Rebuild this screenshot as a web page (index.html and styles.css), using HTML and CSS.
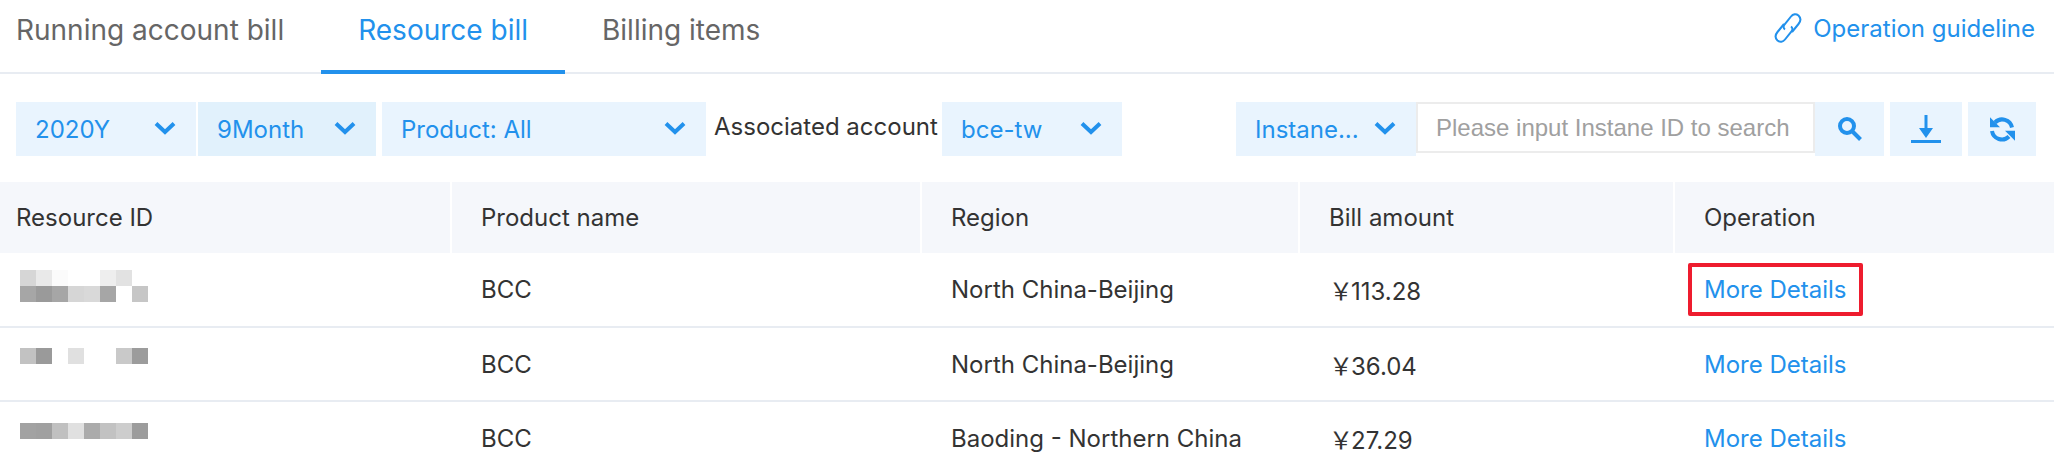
FILE: index.html
```html
<!DOCTYPE html>
<html lang="en">
<head>
    <meta charset="UTF-8">
    <meta name="viewport" content="width=device-width, initial-scale=1.0">
    <title>Resource bill</title>
    <link rel="stylesheet" href="styles.css">
</head>
<body>
    <svg class="defs" width="0" height="0">
        <symbol id="chevron" viewBox="0 0 22 14">
            <path d="M2 2.500 L11 11 L20 2.500" fill="none" stroke="currentColor" stroke-width="4"/>
        </symbol>
    </svg>

    <nav class="tabs">
        <a class="tab">Running account bill</a>
        <a class="tab active">Resource bill</a>
        <a class="tab">Billing items</a>
        <a class="guide">
            <svg class="guide-icon" viewBox="0 0 28 30" fill="none" stroke="currentColor" stroke-width="2">
                <path d="M10 11 L3.500 19 C1 22 1 25 3.500 27.500 C6 29.500 9 29 11 26.500 L17.500 18.500 C19 16.500 18.500 14.500 17 13.500"/>
                <path d="M18 19 L24.500 11 C27 8 27 5 24.500 2.500 C22 0.500 19 1 17 3.500 L10.500 11.500 C9 13.500 9.500 15.500 11 16.500"/>
            </svg>
            Operation guideline
        </a>
    </nav>

    <div class="toolbar">
        <div class="select w-year">2020Y <svg class="chevron"><use href="#chevron"/></svg></div>
        <div class="select w-month hover">9Month <svg class="chevron"><use href="#chevron"/></svg></div>
        <div class="select w-product">Product: All <svg class="chevron"><use href="#chevron"/></svg></div>
        <span class="label">Associated account</span>
        <div class="select w-account">bce-tw <svg class="chevron"><use href="#chevron"/></svg></div>

        <div class="search">
            <div class="select w-type">Instane... <svg class="chevron"><use href="#chevron"/></svg></div>
            <input class="search-input" type="text" placeholder="Please input Instane ID to search">
            <button class="icon-btn w-search">
                <svg width="24" height="24" viewBox="0 0 24 24" fill="none" stroke="currentColor" stroke-width="4">
                    <circle cx="9" cy="9" r="7"/>
                    <path d="M14 14 L22.500 22.500"/>
                </svg>
            </button>
        </div>
        <button class="icon-btn w-download">
            <svg width="30" height="28" viewBox="0 0 30 28" fill="currentColor">
                <path d="M13.500 0 H16.500 V13 H22 L15 23 L8 13 H13.500 Z"/>
                <rect y="25" width="30" height="3"/>
            </svg>
        </button>
        <button class="icon-btn w-refresh">
            <svg width="26" height="26" viewBox="0 0 26 26" fill="none" stroke="currentColor" stroke-width="4">
                <path d="M6 6.500 A10 10 0 0 1 23 11.500"/>
                <path d="M3 15 A10 10 0 0 0 20 20.500"/>
                <path d="M1 1.300 V11.300 H11 Z" fill="currentColor" stroke="none"/>
                <path d="M26 24.700 V14.700 H16 Z" fill="currentColor" stroke="none"/>
            </svg>
        </button>
    </div>

    <table class="bills">
        <colgroup>
            <col class="c1"><col class="c2"><col class="c3"><col class="c4"><col>
        </colgroup>
        <thead>
            <tr>
                <th>Resource ID</th>
                <th>Product name</th>
                <th>Region</th>
                <th>Bill amount</th>
                <th>Operation</th>
            </tr>
        </thead>
        <tbody>
            <tr>
                <td>
                    <!-- blurred id -->
                    <svg class="mosaic up-4" width="128" height="32">
                        <rect x="0" y="0" width="16" height="16" fill="#d6d6d6"/>
                        <rect x="16" y="0" width="16" height="16" fill="#e9e9e9"/>
                        <rect x="32" y="0" width="16" height="16" fill="#fbfbfb"/>
                        <rect x="80" y="0" width="16" height="16" fill="#eeeeee"/>
                        <rect x="96" y="0" width="16" height="16" fill="#e2e2e2"/>
                        <rect x="0" y="16" width="16" height="16" fill="#a6a6a6"/>
                        <rect x="16" y="16" width="16" height="16" fill="#9a9a9a"/>
                        <rect x="32" y="16" width="16" height="16" fill="#a6a6a6"/>
                        <rect x="48" y="16" width="16" height="16" fill="#d6d6d6"/>
                        <rect x="64" y="16" width="16" height="16" fill="#d9d9d9"/>
                        <rect x="80" y="16" width="16" height="16" fill="#a6a6a6"/>
                        <rect x="112" y="16" width="16" height="16" fill="#c6c6c6"/>
                    </svg>
                </td>
                <td>BCC</td>
                <td>North China-Beijing</td>
                <td><span class="yen">￥</span>113.28</td>
                <td><a class="more boxed">More Details</a></td>
            </tr>
            <tr>
                <td>
                    <svg class="mosaic up-8" width="128" height="16">
                        <rect x="0" y="0" width="16" height="16" fill="#c2c2c2"/>
                        <rect x="16" y="0" width="16" height="16" fill="#9a9a9a"/>
                        <rect x="48" y="0" width="16" height="16" fill="#e0e0e0"/>
                        <rect x="96" y="0" width="16" height="16" fill="#c9c9c9"/>
                        <rect x="112" y="0" width="16" height="16" fill="#9c9c9c"/>
                    </svg>
                </td>
                <td>BCC</td>
                <td>North China-Beijing</td>
                <td><span class="yen">￥</span>36.04</td>
                <td><a class="more">More Details</a></td>
            </tr>
            <tr>
                <td>
                    <svg class="mosaic up-8" width="128" height="16">
                        <rect x="0" y="0" width="16" height="16" fill="#a2a2a2"/>
                        <rect x="16" y="0" width="16" height="16" fill="#a0a0a0"/>
                        <rect x="32" y="0" width="16" height="16" fill="#c0c0c0"/>
                        <rect x="48" y="0" width="16" height="16" fill="#e0e0e0"/>
                        <rect x="64" y="0" width="16" height="16" fill="#ababab"/>
                        <rect x="80" y="0" width="16" height="16" fill="#c2c2c2"/>
                        <rect x="96" y="0" width="16" height="16" fill="#cdcdcd"/>
                        <rect x="112" y="0" width="16" height="16" fill="#9c9c9c"/>
                    </svg>
                </td>
                <td>BCC</td>
                <td>Baoding - Northern China</td>
                <td><span class="yen">￥</span>27.29</td>
                <td><a class="more">More Details</a></td>
            </tr>
        </tbody>
    </table>
</body>
</html>
```

FILE: styles.css
```css
:root {
    --blue: #2291ec;
    --tint: #e9f4fe;
    --text: #333;
    --line: #e8ecf2;
}

* {
    margin: 0;
    padding: 0;
    box-sizing: border-box;
}

html, body {
    height: 460px;
    overflow: hidden;
}

body {
    background: #fff;
    color: var(--text);
    font-family: Inter, 'Noto Sans', 'Noto Sans CJK SC', sans-serif;
    font-size: 24px;
}

.defs {
    display: block;
    height: 0;
}

/* tabs */
.tabs {
    display: flex;
    align-items: stretch;
    height: 74px;
    padding-right: 19px;
    border-bottom: 2px solid var(--line);
}

.tab {
    display: flex;
    align-items: center;
    height: 74px;
    padding: 0 37px 14px;
    font-size: 28px;
    color: #666;
}

.tab:first-child {
    padding-left: 16px;
}

.tab.active {
    color: var(--blue);
    border-bottom: 4px solid var(--blue);
    padding-bottom: 10px;
}

.guide {
    display: flex;
    align-items: center;
    gap: 11px;
    height: 72px;
    padding-bottom: 16px;
    margin-left: auto;
    color: var(--blue);
}

.guide-icon {
    width: 28px;
    height: 30px;
}

/* filter row */
.toolbar {
    display: flex;
    align-items: flex-start;
    height: 54px;
    margin-top: 28px;
    padding: 0 18px 0 16px;
}

.select {
    display: flex;
    align-items: center;
    justify-content: space-between;
    height: 54px;
    padding: 0 20px 0 19px;
    background: var(--tint);
    color: var(--blue);
    white-space: nowrap;
}

.select.hover {
    background: #e1f1fc;
}

.chevron {
    width: 22px;
    height: 14px;
    margin-top: -3px;
}

.w-year { width: 180px; margin-right: 2px; }
.w-month { width: 178px; margin-right: 6px; }
.w-product { width: 324px; margin-right: 8px; }
.w-account { width: 180px; }
.w-type { width: 180px; }

.label {
    width: 228px;
    line-height: 50px;
    white-space: nowrap;
}

.search {
    display: flex;
    margin-left: auto;
    margin-right: 6px;
}

.search-input {
    width: 399px;
    height: 51px;
    padding: 0 12px 0 18px;
    border: 2px solid #ececec;
    border-radius: 0;
    outline: none;
    font-family: 'Liberation Sans', Arial, sans-serif;
    font-size: 24px;
}

.search-input::placeholder {
    color: #a0a0a0;
    opacity: 1;
}

.icon-btn {
    display: flex;
    align-items: center;
    justify-content: center;
    height: 54px;
    border: none;
    background: var(--tint);
    color: var(--blue);
}

.w-search { width: 69px; }
.w-download { width: 72px; margin-right: 6px; }
.w-refresh { width: 68px; }

/* table */
.bills {
    width: 100%;
    margin-top: 26px;
    border-collapse: collapse;
    table-layout: fixed;
}

.c1 { width: 451px; }
.c2 { width: 470px; }
.c3 { width: 378px; }
.c4 { width: 375px; }

.bills th {
    height: 71px;
    padding-left: 29px;
    background: #f5f7fb;
    border-left: 2px solid #fff;
    font-weight: 400;
    text-align: left;
}

.bills th:first-child {
    padding-left: 16px;
    border-left: none;
}

.bills td {
    height: 74px;
    padding-left: 30px;
    border-bottom: 2px solid var(--line);
}

.bills td:first-child {
    padding-left: 20px;
}

.bills tbody tr:last-child td {
    border-bottom: none;
}

.mosaic {
    display: block;
    filter: blur(0.5px);
}

.up-4 { margin-bottom: 8px; }
.up-8 { margin-bottom: 16px; }

.more {
    color: var(--blue);
}

.yen {
    letter-spacing: -2px;
}

/* red marker on the first row */
.more.boxed {
    position: relative;
}

.more.boxed::after {
    content: "";
    position: absolute;
    left: -16px;
    right: -16px;
    top: -12px;
    bottom: -12px;
    border: 4px solid #ee1c2e;
    border-radius: 2px;
}
```
